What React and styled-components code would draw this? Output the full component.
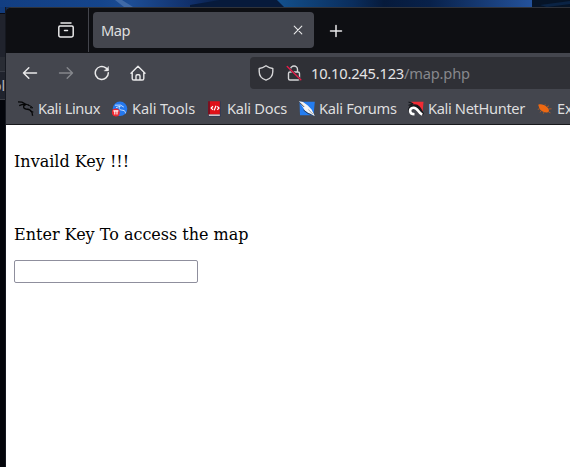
import React from "react";
import styled, { createGlobalStyle } from "styled-components";

const GlobalStyle = createGlobalStyle`
  * { box-sizing: border-box; }
  html, body { margin: 0; padding: 0; overflow: hidden; background: #03050b; }
`;

const Desktop = styled.div`
  display: grid;
  grid-template: 7px 460px / 6px 564px;
  width: 570px;
  height: 467px;
  overflow: hidden;
  font-family: "Noto Sans", sans-serif;
  background: #0c2b5c;
`;

const Wallpaper = styled.svg`
  grid-column: 1 / 3;
  display: block;
  width: 570px;
  height: 7px;
`;

const BackWindow = styled.div`
  display: flex;
  flex-direction: column;
  overflow: hidden;
  background: #03050b;
  border-right: 1px solid #151820;
`;

const Slice = styled.div`
  flex: none;
  height: ${(p) => p.$h}px;
  background: ${(p) => p.$bg};
  color: #b5b8c0;
  font-size: 14px;
  line-height: 28px;
  display: flex;
  justify-content: flex-end;
`;

const Window = styled.div`
  display: flex;
  flex-direction: column;
  overflow: hidden;
  border-top: 1px solid #30333a;
  border-top-left-radius: 5px;
  background: #0e0f13;
`;

const TabBar = styled.div`
  display: flex;
  flex: none;
  height: 45px;
  background: #0e0f13;
`;

const ViewButton = styled.div`
  display: flex;
  align-items: center;
  justify-content: flex-end;
  width: 83px;
  height: 44px;
  padding-right: 14px;
  border-right: 1px solid #43454c;
`;

const Tab = styled.div`
  display: flex;
  align-items: center;
  justify-content: space-between;
  width: 221px;
  height: 36px;
  margin: 4px 13.5px 0 4px;
  padding: 0 10px 0 8px;
  border-radius: 4px;
  background: #44464e;
  color: #dededf;
  font-size: 14.67px;
  letter-spacing: -0.5px;
`;

const NewTab = styled.div`
  display: flex;
  align-items: center;
  height: 45px;
`;

const Toolbar = styled.div`
  display: flex;
  flex: none;
  align-items: center;
  height: 40px;
  padding-left: 16px;
  gap: 20px;
  background: #44464e;
`;

const AddressBar = styled.div`
  display: flex;
  align-items: center;
  flex: 1;
  height: 32px;
  margin-left: 84px;
  padding-left: 8px;
  border-radius: 4px 0 0 4px;
  background: #2f3036;
  color: #e4e4e5;
  font-size: 14.67px;
  letter-spacing: -0.2px;
  svg + svg { margin: 0 9px 0 12px; }
`;

const UrlPath = styled.span`
  color: #87888d;
`;

const Bookmarks = styled.div`
  display: flex;
  flex: none;
  height: 32px;
  padding-left: 12px;
  background: #44464e;
  border-bottom: 1px solid #17181c;
`;

const Bookmark = styled.div`
  display: flex;
  flex: none;
  align-items: center;
  gap: 4px;
  width: ${(p) => p.$w}px;
  padding-bottom: 1px;
  white-space: nowrap;
  color: #dededf;
  font-size: 14.67px;
  letter-spacing: ${(p) => p.$tracking}px;
  svg { flex: none; position: relative; top: 1px; }
`;

const Page = styled.main`
  flex: 1;
  padding: 27px 8px 0;
  background: #fff;
  color: #000;
  font-family: "DejaVu Serif", serif;
  font-size: 16px;
  line-height: 19px;
`;

const Message = styled.p`
  margin: 0 0 54px;
`;

const Label = styled.p`
  margin: 0 0 16px;
`;

const KeyInput = styled.input`
  display: block;
  width: 184px;
  height: 23px;
  padding: 1px 2px;
  border: 1px solid #8f8f9d;
  border-radius: 2px;
  outline: none;
  background: #fff;
`;

const Icon = ({ children, size = 16, color = "#e9e9ea", width = 1.4 }) => (
  <svg width={size} height={size} viewBox={`0 0 ${size} ${size}`} fill="none"
    stroke={color} strokeWidth={width} strokeLinecap="round" strokeLinejoin="round">
    {children}
  </svg>
);

const Dragon = () => (
  <svg width="16" height="16" viewBox="0 0 16 16" fill="none" stroke="#050607">
    <path d="M0 .8 4 1.2 7.5 3 11 4.2M1.2 4.6 4.5 3.4 8 3.6" strokeWidth="1.2" />
    <path d="M7.4 3.6C4.6 4.8 5.2 7.6 8 8c3.6.4 6.6 1.2 6.6 6.8" strokeWidth="1.4" />
    <path d="m10 4 3.6 1.6 1 1.4-2.6-.4M12.4 10.4l3 .6" strokeWidth="1" />
  </svg>
);

const Tools = () => (
  <svg width="16" height="16" viewBox="0 0 16 16" fill="none">
    <circle cx="8" cy="7.8" r="7.3" fill="#2478ee" />
    <path d="M3 4.2 8.5 4.1l3.3 2M4 6.6l4.5-1.4M8 5.5c-2 3 .5 3.5 3 3.8 1.8.2 2.5 1.5 2.5 3" stroke="#c7dfff" strokeWidth="1" />
    <circle cx="3.8" cy="11.4" r="4" fill="#ed2830" />
    <path d="M1.4 9.9h5M2.8 10v3.5M5 10v3.5" stroke="#fff" strokeWidth="1.1" />
  </svg>
);

const Docs = () => (
  <svg width="16" height="16" viewBox="0 0 16 16" fill="none">
    <path d="M1 .3h2.2v13.2H1z" fill="#7d1020" />
    <path d="M3 .3h10v13.2H3z" fill="#df1018" />
    <path d="M1.8 13.5H13v1.4H2z" fill="#e9dada" />
    <path d="M13.3.3v15H1.4" stroke="#26355c" strokeWidth=".7" />
    <path d="M6 5.3 4.2 7 6 8.8M10.3 5.3 12 7l-1.7 1.8M9 4.7 7.2 9.4" stroke="#fff" strokeWidth="1.2" />
  </svg>
);

const Forums = () => (
  <svg width="16" height="16" viewBox="0 0 16 16" fill="none">
    <path d="M.5.8h15.3l-1.3 13.4H1z" fill="#247df0" />
    <path d="M0 .3 4 1l4.8 3.6 3.8 4L15.8 15l-6-2.8-4-2.6-2.4-4z" fill="#f4f4f4" />
    <path d="m.5 1.3 4.6 4.6M4.5 9l4.2 3.3 3.8 1.4" stroke="#24262b" strokeWidth=".8" />
    <path d="m9.3 8.6 4.7 4.6" stroke="#8c8d91" strokeWidth=".8" />
  </svg>
);

const NetHunter = () => (
  <svg width="16" height="16" viewBox="0 0 16 16" fill="none">
    <path d="M3 .8h12.5L14.4 14z" fill="#f02b34" />
    <path d="M.5 1 5.3 2.8M.5 4.3l4-1.1" stroke="#15171b" strokeWidth="1.2" />
    <path d="M3.5 12C-.4 8.5 2.6 4.7 6.6 4.7c4.6 0 5.4 4 8.2 9" stroke="#17191e" strokeWidth="3" />
    <path d="M6.5 13.2C.8 13 .9 7.2 5.4 6.7c4.3-.4 4.4 4.7 8.8 7" stroke="#fff" strokeWidth="2.6" />
    <path d="M5.4 10.2c1.7-.6 3 .7 3 2.6" stroke="#44464e" strokeWidth="1" />
  </svg>
);

const Exploit = () => (
  <svg width="16" height="16" viewBox="0 0 16 16" fill="none">
    <path d="M1.2 3.8c3-1.2 6 0 8.7 2.2 2.2 1.8 2.8 4.3 1 5.2-3 .9-7.3-.6-8.5-3.6z" fill="#ed6812" />
    <path d="m2.4 8-1.6.3M4 10l-.9 1.3M7 11l-.5 1.6M7.6 4.8l.7-1.5M10 6l2-1.2M11.5 8l3-.2M11 10.5l2.5 1.4" stroke="#c7611f" strokeWidth=".8" />
  </svg>
);

const bookmarks = [
  ["Kali Linux", 94, Dragon, -0.4],
  ["Kali Tools", 95, Tools, -0.12],
  ["Kali Docs", 92, Docs, -0.26],
  ["Kali Forums", 109, Forums, -0.3],
  ["Kali NetHunter", 129, NetHunter, -0.36],
  ["Exploit-DB", 100, Exploit, -0.2],
];

export default function App() {
  return (
    <>
      <GlobalStyle />
      <Desktop>
        <Wallpaper viewBox="0 0 570 7" preserveAspectRatio="none">
          <defs>
            <linearGradient id="sky">
              <stop offset="0" stopColor="#123e82" />
              <stop offset=".18" stopColor="#15458c" />
              <stop offset=".23" stopColor="#1d4d94" />
              <stop offset=".34" stopColor="#102e68" />
              <stop offset=".4" stopColor="#071b3c" />
              <stop offset=".49" stopColor="#061633" />
            </linearGradient>
            <linearGradient id="ridge">
              <stop offset="0" stopColor="#13508c" />
              <stop offset=".3" stopColor="#0a2d5c" />
              <stop offset=".42" stopColor="#061a3b" />
              <stop offset=".6" stopColor="#08214a" />
              <stop offset="1" stopColor="#24529b" />
            </linearGradient>
          </defs>
          <path d="M0 0h570v7H0z" fill="url(#sky)" />
          <path d="M115 0h7l11 7h-9z" fill="#3f69a6" />
          <path d="M190 5 220 0h58l6 7h-94z" fill="#071a3b" />
          <path d="M277 0h255v7H284z" fill="url(#ridge)" />
          <path d="M532 0h38v7h-38z" fill="#061427" />
          <path d="M540 5 570 1v3l-23 3z" fill="#0a2344" />
        </Wallpaper>
        <BackWindow>
          <Slice $h={6} $bg="#123b7b" />
          <Slice $h={1} $bg="#080b14" />
          <Slice $h={43} $bg="#20232d" />
          <Slice $h={14} $bg="#292c34" />
          <Slice $h={1} $bg="#393c45" />
          <Slice $h={27} $bg="#20232d">ol</Slice>
          <Slice $h={1} $bg="#3a3c43" />
        </BackWindow>
        <Window>
          <TabBar>
            <ViewButton>
              <Icon size={16} width={1.5}>
                <path d="M3 1h10M2 4h12q1.2 0 1.2 1.2v8.1q0 1.7-1.7 1.7h-11Q.8 15 .8 13.3V5.2Q.8 4 2 4ZM6.5 8.5h3" />
              </Icon>
            </ViewButton>
            <Tab>
              <span>Map</span>
              <Icon size={12} width={1.1}><path d="m2.2 2.2 7.6 7.6m0-7.6L2.2 9.8" /></Icon>
            </Tab>
            <NewTab>
              <Icon width={1.5}><path d="M8 2.5v11M2.5 8h11" /></Icon>
            </NewTab>
          </TabBar>
          <Toolbar>
            <Icon width={1.5}><path d="M14.5 8H1.5m5.3-5.2L1.5 8l5.3 5.2" /></Icon>
            <Icon color="#85878c"><path d="M1.5 8h13M9.2 2.8 14.5 8l-5.3 5.2" /></Icon>
            <Icon width={1.5}><path d="M14.3 7.8A6.5 6.5 0 1 1 11.8 2.8l2 1.8" /><path d="M14.5 1.7v4.2h-4.2z" fill="#e9e9ea" strokeWidth=".4" /></Icon>
            <Icon><path d="M1 8.2 8 1.3l7 6.9M2.2 7.2v6.2q0 1.6 1.6 1.6h8.4q1.6 0 1.6-1.6V7.2M6 15v-4.1q0-1.1 1.1-1.1h1.8q1.1 0 1.1 1.1V15" /></Icon>
            <AddressBar>
              <Icon color="#d5d5d7"><path d="M8 .8q3.3 2.4 6.8 2.7v3.1c0 4-2.8 7.4-6.8 8.6-4-1.2-6.8-4.6-6.8-8.6V3.5Q4.7 3.2 8 .8Z" /></Icon>
              <Icon color="#d5d5d7">
                <path d="M4.5 7V4.5a3.5 3.5 0 0 1 7 0V7M4 7h8q1.5 0 1.5 1.5v5q0 1.5-1.5 1.5H4q-1.5 0-1.5-1.5v-5Q2.5 7 4 7Z" />
                <path d="m1.2 1.5 13.6 13.3" stroke="#2f3036" strokeWidth="2.4" />
                <path d="m1.2 1.5 13.6 13.3" stroke="#e51d4a" />
              </Icon>
              <span>10.10.245.123<UrlPath>/map.php</UrlPath></span>
            </AddressBar>
          </Toolbar>
          <Bookmarks>
            {bookmarks.map(([name, width, Glyph, tracking]) => (
              <Bookmark key={name} $w={width} $tracking={tracking}><Glyph />{name}</Bookmark>
            ))}
          </Bookmarks>
          <Page>
            <Message>Invaild Key !!!</Message>
            <Label>Enter Key To access the map</Label>
            <KeyInput type="text" aria-label="Key" />
          </Page>
        </Window>
      </Desktop>
    </>
  );
}
